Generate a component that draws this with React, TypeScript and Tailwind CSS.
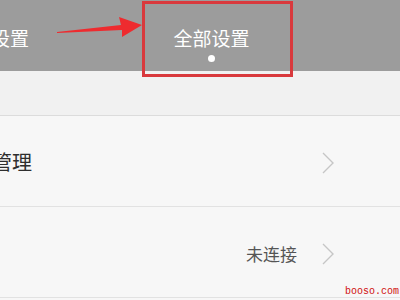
const font = { fontFamily: '"Noto Sans CJK SC", "Noto Sans", sans-serif' };

function Chevron() {
	return (
		<svg width="12" height="22" viewBox="0 0 12 22" fill="none">
			<path d="M1 1 L11 11 L1 21" stroke="#c6c6c6" strokeWidth="1.4" />
		</svg>
	);
}

function Row({ label, value }: { label: string; value?: string }) {
	return (
		<div className="flex h-[91px] items-center justify-between border-b border-[#e2e2e2] bg-[#f7f7f7]">
			<span className="-ml-[8px] mt-[2px] text-[20px] text-[#2e2e2e]">{label}</span>
			<div className="mr-[66px] mt-[4px] flex items-center gap-[25px]">
				{value && <span className="text-[17px] text-[#555]">{value}</span>}
				<Chevron />
			</div>
		</div>
	);
}

export default function App() {
	return (
		<div className="relative h-[300px] w-[400px] overflow-hidden bg-[#f7f7f7]" style={font}>
			<div className="flex h-[71px] items-start overflow-hidden bg-[#9c9c9c] pt-[26px] text-white">
				<div className="-ml-[94px] flex w-[170px] shrink-0 justify-center text-[19px] leading-[24px]">常用设置</div>
				<div className="ml-[60px] flex w-[151px] shrink-0 flex-col items-center">
					<span className="text-[19px] leading-[24px]">全部设置</span>
					<span className="mt-[5px] h-[7px] w-[7px] rounded-full bg-white" />
				</div>
			</div>
			<div className="h-[45px] border-b border-[#dcdcdc] bg-[#f1f1f1]" />
			<Row label="管理" />
			<Row label="" value="未连接" />

			{/* annotation overlay */}
			<div className="absolute left-[142px] top-[1px] h-[76px] w-[151px] border-[3px] border-[#d9393d]" />
			<svg className="absolute left-[55px] top-[14px]" width="90" height="26" viewBox="0 0 90 26">
				<path d="M2 18 L66 11 L64 3 L87 11 L67 23 L67 16 L2 19 Z" fill="#ee2b2f" />
			</svg>
			<span
				className="absolute right-[1px] bottom-[3px] text-[10px] leading-none text-[#d01010]"
				style={{ fontFamily: '"Liberation Mono", monospace' }}
			>
				booso.com
			</span>
		</div>
	);
}
